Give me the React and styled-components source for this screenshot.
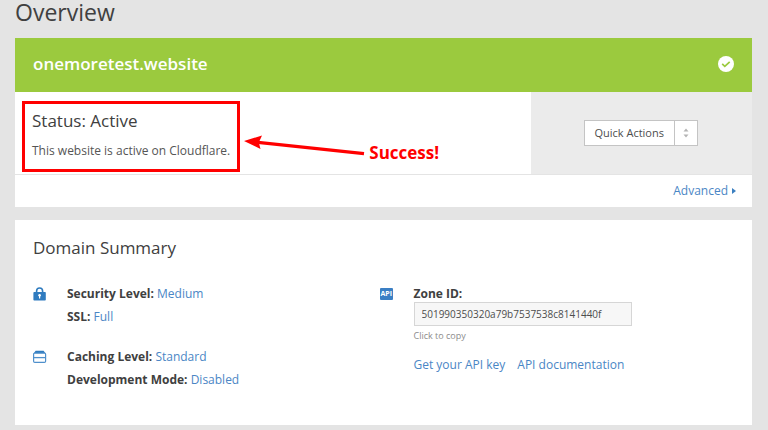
import React from 'react';
import styled, { createGlobalStyle } from 'styled-components';

const GlobalStyle = createGlobalStyle`
  * {
    box-sizing: border-box;
  }
  body {
    margin: 0;
    background: #e4e4e4;
    color: #404040;
    font-family: 'Open Sans', 'Noto Sans', sans-serif;
    font-size: 12px;
    line-height: 16px;
  }
`;

const summary = [
  {
    id: 'security',
    icon: 'lock',
    rows: [
      { label: 'Security Level:', value: 'Medium' },
      { label: 'SSL:', value: 'Full' },
    ],
  },
  {
    id: 'caching',
    icon: 'cache',
    rows: [
      { label: 'Caching Level:', value: 'Standard' },
      { label: 'Development Mode:', value: 'Disabled' },
    ],
  },
];

const LockIcon = () => (
  <svg width="14" height="14" viewBox="0 0 14 14" aria-hidden="true">
    <path d="M3.6 6V4a3 3 0 0 1 6 0v2" fill="none" stroke="#2f7bbf" strokeWidth="1.6" />
    <rect x="0.4" y="5" width="12.4" height="8.6" rx="0.8" fill="#2f7bbf" />
    <circle cx="6.6" cy="8.2" r="1.3" fill="#fff" />
    <path d="M6 8.6h1.2v3H6z" fill="#fff" />
  </svg>
);

const CacheIcon = () => (
  <svg width="14" height="14" viewBox="0 0 14 14" aria-hidden="true">
    <path d="M2.6 0.8h8l2 2.6H0.6z" fill="#2f7bbf" />
    <rect x="0.6" y="3" width="12" height="9.4" rx="1.2" fill="none" stroke="#4f90cc" strokeWidth="1.2" />
    <path d="M0.6 7.6h12" stroke="#4f90cc" strokeWidth="1.3" />
  </svg>
);

const CheckIcon = () => (
  <svg width="16" height="16" viewBox="0 0 16 16" role="img" aria-label="Active">
    <circle cx="8" cy="8" r="8" fill="#fff" />
    <path d="M4.2 7.9l2.6 2.4 4.9-4.5" fill="none" stroke="#9bca3e" strokeWidth="1.7" />
  </svg>
);

const SortIcon = () => (
  <svg width="6" height="10" viewBox="0 0 6 10" aria-hidden="true">
    <path d="M3 0.5l2.5 3h-5zM3 9.5l-2.5-3h5z" fill="#b4b4b4" />
  </svg>
);

const CaretIcon = () => (
  <svg width="4" height="6" viewBox="0 0 4 6" aria-hidden="true">
    <path d="M0 0l4 3-4 3z" fill="#3b7fc0" />
  </svg>
);

const App = () => (
  <>
    <GlobalStyle />
    <Page>
      <PageTitle>Overview</PageTitle>

      <Card>
        <Banner>
          <Domain>onemoretest.website</Domain>
          <CheckIcon />
        </Banner>
        <StatusRow>
          <Status>
            <Highlight>
              <Heading>Status: Active</Heading>
              <StatusText>This website is active on Cloudflare.</StatusText>
            </Highlight>
            <Callout>
              <svg width="122" height="31" viewBox="0 0 122 31" aria-hidden="true">
                <path d="M14 8.3L120 19.6" stroke="#f00" strokeWidth="3.2" />
                <path d="M0 7L18 1.5L14.8 8.4L16.5 15z" fill="#f00" />
              </svg>
              <CalloutText>Success!</CalloutText>
            </Callout>
          </Status>
          <Actions>
            <SelectBox>
              <Select aria-label="Quick Actions" defaultValue="quick">
                <option value="quick">Quick Actions</option>
              </Select>
              <SelectArrows>
                <SortIcon />
              </SelectArrows>
            </SelectBox>
          </Actions>
        </StatusRow>
        <CardFooter>
          <AdvancedLink href="#advanced">
            Advanced
            <CaretIcon />
          </AdvancedLink>
        </CardFooter>
      </Card>

      <Card>
        <SummaryBody>
          <Heading>Domain Summary</Heading>
          <Columns>
            <Groups>
              {summary.map(({ id, icon, rows }) => (
                <Group key={id}>
                  <IconSlot>{icon === 'lock' ? <LockIcon /> : <CacheIcon />}</IconSlot>
                  <Rows>
                    {rows.map(({ label, value }) => (
                      <div key={label}>
                        <strong>{label}</strong> <Link href={`#${id}`}>{value}</Link>
                      </div>
                    ))}
                  </Rows>
                </Group>
              ))}
            </Groups>
            <Group>
              <IconSlot>
                <ApiBadge>API</ApiBadge>
              </IconSlot>
              <Zone>
                <ZoneLabel htmlFor="zone-id">Zone ID:</ZoneLabel>
                <ZoneInput id="zone-id" readOnly value="501990350320a79b7537538c8141440f" />
                <Hint>Click to copy</Hint>
                <ApiLinks>
                  <Link href="#api-key">Get your API key</Link>
                  <Link href="#api-docs">API documentation</Link>
                </ApiLinks>
              </Zone>
            </Group>
          </Columns>
        </SummaryBody>
      </Card>
    </Page>
  </>
);

const Page = styled.main`
  display: flex;
  flex-direction: column;
  gap: 13px;
  padding: 0 16px 4px 15px;
`;

const PageTitle = styled.h1`
  margin: 0;
  font-size: 23px;
  font-weight: 400;
  line-height: 25px;
`;

const Card = styled.section`
  background: #fff;
`;

const Banner = styled.header`
  display: flex;
  align-items: center;
  justify-content: space-between;
  padding: 14px 18px 16px;
  background: #9bca3e;
`;

const Domain = styled.h2`
  margin: 0;
  color: #fff;
  font-size: 17px;
  font-weight: 600;
  line-height: 24px;
`;

const StatusRow = styled.div`
  display: grid;
  grid-template-columns: 7fr 3fr;
  border-bottom: 1px solid #e4e4e4;
`;

const Status = styled.div`
  display: flex;
  align-items: center;
  padding: 9px 7px 2px;
`;

const Highlight = styled.div`
  padding: 5px 7px 10px;
  border: 3px solid #f00;
  white-space: nowrap;
`;

const Heading = styled.h3`
  margin: 0;
  font-size: 17px;
  font-weight: 400;
  line-height: 24px;
`;

const StatusText = styled.p`
  margin: 10px 0 0;
  color: #555;
`;

const Callout = styled.div`
  display: flex;
  align-items: flex-end;
  gap: 3px;
  margin: 26px 0 0 4px;
`;

const CalloutText = styled.span`
  color: #f00;
  font-size: 17px;
  font-weight: 700;
  line-height: 24px;
`;

const Actions = styled.div`
  display: flex;
  align-items: center;
  justify-content: center;
  background: #ebebeb;
`;

const SelectBox = styled.div`
  display: flex;
  border: 1px solid #c4c4c4;
  background: #fff;
`;

const Select = styled.select`
  appearance: none;
  padding: 4px 10px 4px 9px;
  border: none;
  border-radius: 0;
  background: none;
  color: #4d4d4d;
  font: inherit;
  font-size: 11px;
`;

const SelectArrows = styled.span`
  display: flex;
  align-items: center;
  justify-content: center;
  width: 23px;
  border-left: 1px solid #c4c4c4;
`;

const CardFooter = styled.footer`
  display: flex;
  justify-content: flex-end;
  padding: 8px 16px;
`;

const Link = styled.a`
  color: #4a86c5;
  text-decoration: none;
`;

const AdvancedLink = styled(Link)`
  display: flex;
  align-items: center;
  gap: 4px;
`;

const SummaryBody = styled.div`
  padding: 16px 26px 37px 18px;
`;

const Columns = styled.div`
  display: grid;
  grid-template-columns: 1fr 1fr;
  margin-top: 26px;
`;

const Groups = styled.div`
  display: flex;
  flex-direction: column;
  gap: 24px;
`;

const Group = styled.div`
  display: flex;
`;

const IconSlot = styled.div`
  display: flex;
  flex: none;
  align-items: center;
  width: 34px;
  height: 16px;
`;

const Rows = styled.div`
  display: flex;
  flex-direction: column;
  gap: 7px;
`;

const ApiBadge = styled.span`
  padding: 0 1px;
  border-radius: 1px;
  background: #3b7fc4;
  color: #fff;
  font-size: 7px;
  font-weight: 700;
  line-height: 12px;
`;

const Zone = styled.div`
  display: flex;
  flex-direction: column;
  align-items: flex-start;
`;

const ZoneLabel = styled.label`
  font-weight: 700;
`;

const ZoneInput = styled.input`
  width: 218px;
  height: 24px;
  padding: 0 7px;
  border: 1px solid #d6d6d6;
  background: #f7f7f7;
  color: #4d4d4d;
  font: inherit;
  font-size: 10px;
`;

const Hint = styled.small`
  margin-top: 2px;
  color: #8c8c8c;
  font-size: 9px;
`;

const ApiLinks = styled.div`
  display: flex;
  gap: 12px;
  margin-top: 13px;
`;

export default App;
